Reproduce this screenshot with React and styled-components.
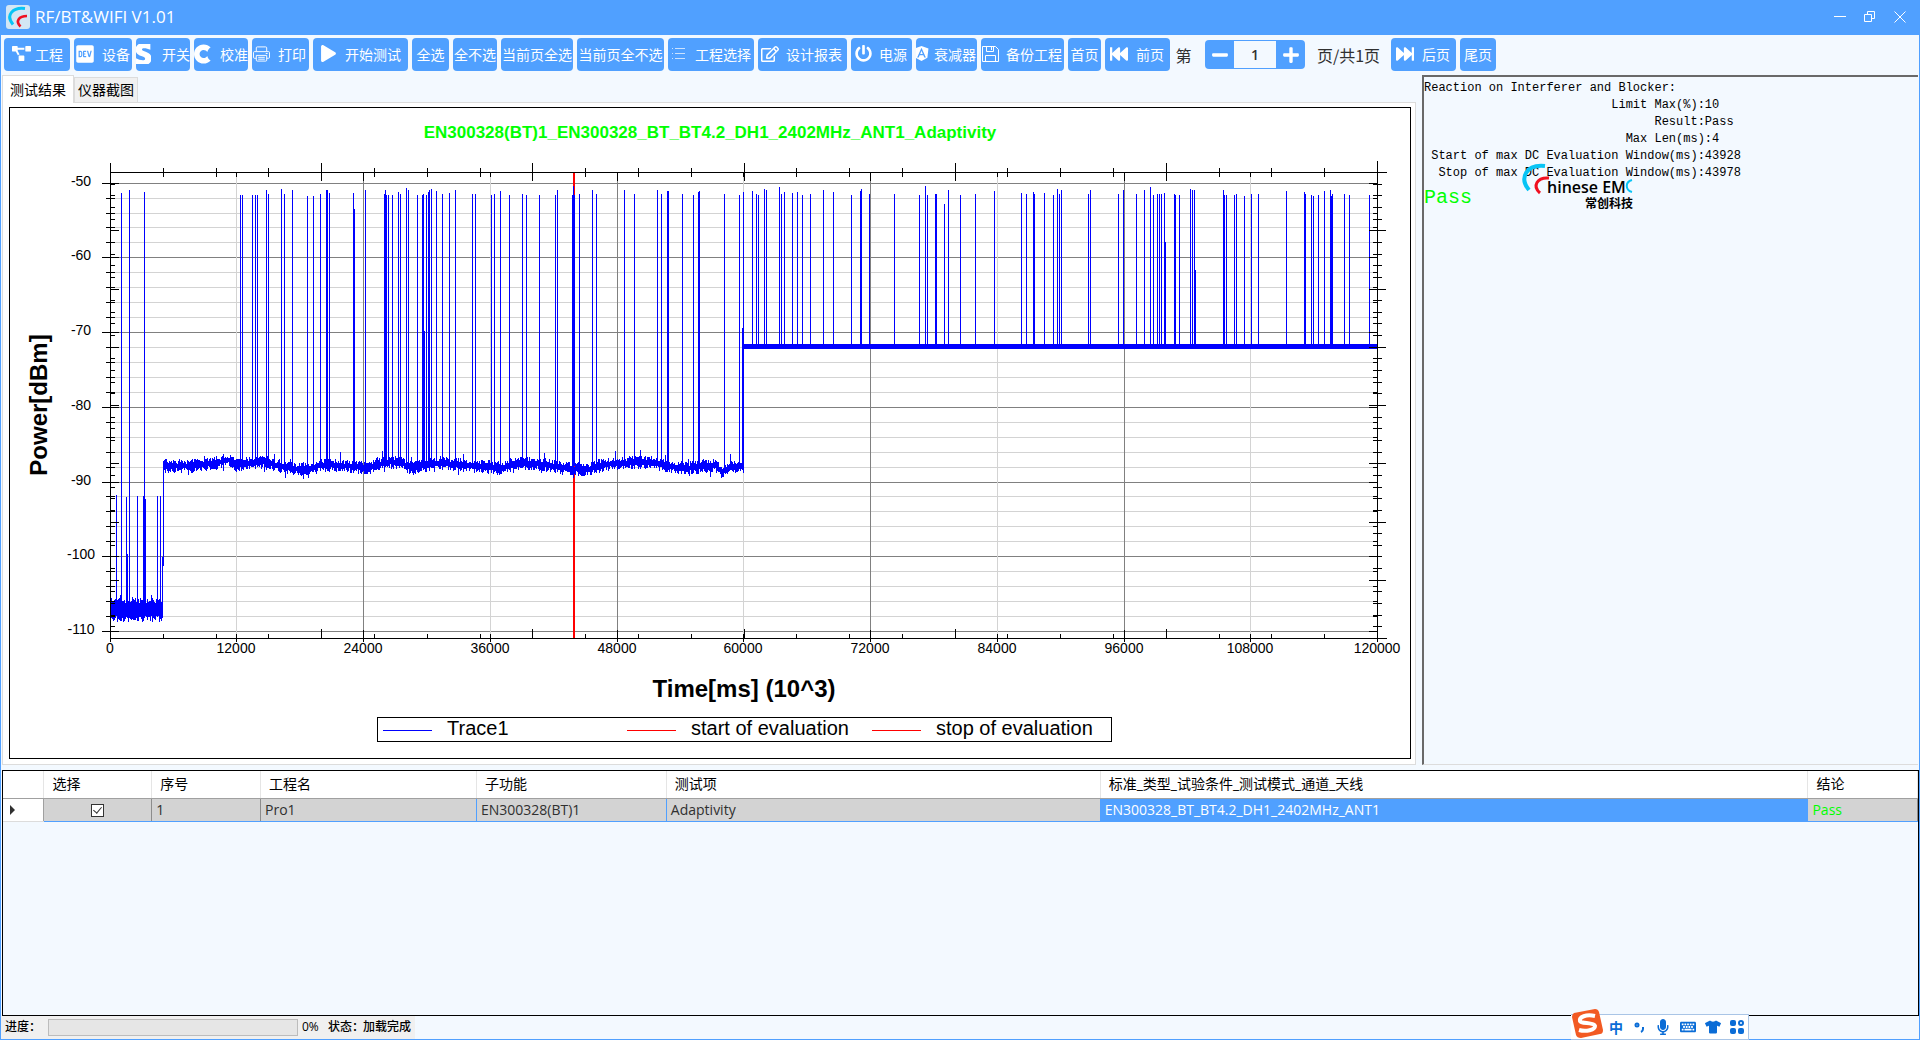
import { useState } from "react";
import styled, { createGlobalStyle } from "styled-components";
import {
  FaAngular,
  FaCuttlefish,
  FaDev,
  FaFastBackward,
  FaFastForward,
  FaKeyboard,
  FaMicrophone,
  FaMinus,
  FaPlay,
  FaPlus,
  FaPowerOff,
  FaProjectDiagram,
  FaRegEdit,
  FaStripeS,
  FaTshirt
} from "react-icons/fa";

const BLUE = "#50a0ff";
const PALE = "#f3f9ff";

const GlobalStyle = createGlobalStyle`
  * {
    box-sizing: border-box;
  }

  body {
    margin: 0;
    font-family: "Open Sans", "Noto Sans CJK SC", sans-serif;
    font-size: 14px;
    color: #303030;
  }

  button,
  input {
    font: inherit;
    color: inherit;
    margin: 0;
    padding: 0;
    border: 0;
  }
`;

// Window frame
// ----------------------------------------------------------------------------

const Window = styled.div`
  display: flex;
  flex-direction: column;
  min-height: 100vh;
  border: 1px solid ${BLUE};
  background: ${PALE};
`;

const TitleBar = styled.header`
  display: flex;
  align-items: center;
  height: 34px;
  padding: 0 4px 2px 5px;
  background: ${BLUE};
  color: #fff;
`;

const AppName = styled.h1`
  flex: 1;
  margin: 0 0 0 5px;
  font-size: 17px;
  line-height: 24px;
  font-weight: 400;
`;

const WindowButton = styled.button`
  display: flex;
  justify-content: center;
  width: 30px;
  background: none;
`;

// Toolbar
// ----------------------------------------------------------------------------

const Toolbar = styled.nav`
  display: flex;
  align-items: center;
  gap: 4px;
  height: 40px;
  padding: 0 3px 1px;
`;

const ToolButton = styled.button`
  display: flex;
  flex: none;
  align-items: center;
  justify-content: ${p => (p.$pad === undefined ? "center" : "flex-start")};
  gap: ${p => p.$gap || 0}px;
  width: ${p => p.$width}px;
  height: 33px;
  padding: 0 0 2px ${p => p.$pad || 0}px;
  overflow: hidden;
  border-radius: 4px;
  background: ${BLUE};
  color: #fff;
  font-family: "Noto Sans CJK SC", sans-serif;
  line-height: 20px;
  white-space: nowrap;

  svg {
    flex: none;
  }
`;

const PageText = styled.label`
  flex: none;
  width: ${p => p.$width}px;
  text-align: center;
  font-family: "Noto Sans CJK SC", sans-serif;
  font-size: 16px;
  line-height: 24px;
`;

const Pager = styled.div`
  display: flex;
  width: 100px;
  height: 29px;
  margin: 0 1px 0 6px;
  padding: 1px 0;
  border-radius: 4px;
  background: ${BLUE};
`;

const PagerButton = styled.button`
  display: flex;
  align-items: center;
  justify-content: center;
  width: 29px;
  background: none;
  color: #fff;
`;

const PagerInput = styled.input`
  width: 42px;
  background: ${PALE};
  text-align: center;
  font-weight: 600;
`;

// Main area
// ----------------------------------------------------------------------------

const Main = styled.main`
  display: grid;
  grid-template-columns: minmax(0, 1fr) 496px;
  gap: 6px;
  padding: 0 1px;
`;

const Tabs = styled.div`
  display: flex;
  align-items: flex-end;
  height: 27px;
`;

const Tab = styled.button`
  width: ${p => (p.$active ? 72 : 64)}px;
  height: ${p => (p.$active ? 28 : 25)}px;
  margin-bottom: ${p => (p.$active ? -1 : 0)}px;
  padding-bottom: 2px;
  border: 1px solid #dcdcdc;
  border-bottom: 0;
  background: ${p => (p.$active ? "#fff" : "#f0f0f0")};
  color: #000;
  font-family: "Noto Sans CJK SC", sans-serif;
  line-height: 20px;
  white-space: nowrap;
`;

const TabPanel = styled.section`
  padding: 4px 4px 5px 6px;
  border: 1px solid #dcdcdc;
  background: #fff;
`;

const ChartCard = styled.figure`
  display: flex;
  flex-direction: column;
  align-items: center;
  margin: 0;
  padding-bottom: 15px;
  border: 1px solid #000;
  color: #000;
  font-family: "Liberation Sans", Arial, sans-serif;
`;

const ChartTitle = styled.figcaption`
  height: 42px;
  padding-top: 15px;
  color: #0f0;
  font-size: 17px;
  line-height: 20px;
  font-weight: 700;
`;

const Plot = styled.svg`
  display: block;
  width: 100%;
  height: auto;
  font-size: 14px;
  shape-rendering: crispEdges;
`;

const AxisTitle = styled.div`
  margin: 13px 0 14px;
  padding-left: 68px;
  font-size: 24px;
  line-height: 28px;
  font-weight: 700;
`;

const Legend = styled.ul`
  display: grid;
  grid-template-columns: 244px 245px 1fr;
  width: 735px;
  height: 25px;
  margin: 0 0 1px 69px;
  padding: 0 0 0 5px;
  border: 1px solid #000;
  list-style: none;
`;

const LegendItem = styled.li`
  display: flex;
  align-items: center;
  gap: 15px;
  padding-bottom: 4px;
  font-size: 20px;
  line-height: 20px;
  white-space: nowrap;

  &::before {
    content: "";
    width: 49px;
    height: 1px;
    margin-top: 4px;
    background: ${p => p.$color};
  }
`;

const Report = styled.section`
  position: relative;
  padding: 3px 0;
  border: 1px solid #696969;
  border-width: 2px 0 1px 2px;
  border-color: #696969 #dcdcdc #dcdcdc #696969;
  color: #000;
  font-family: "Liberation Mono", monospace;
`;

const ReportText = styled.pre`
  margin: 0;
  font-family: inherit;
  font-size: 12px;
  line-height: 17px;
`;

const Verdict = styled.p`
  margin: 4px 0 0;
  color: #0f0;
  font-size: 20px;
  line-height: 24px;
`;

const Watermark = styled.svg`
  position: absolute;
  left: 98px;
  top: 85px;
`;

// Results table
// ----------------------------------------------------------------------------

const TableBox = styled.section`
  flex: 1;
  margin: 5px 0 0 1px;
  border: 1px solid #000;
`;

const Table = styled.table`
  width: 100%;
  border-collapse: collapse;
  table-layout: fixed;
  background: #fff;
`;

const HeadCell = styled.th`
  height: 27px;
  padding: 0 8px;
  border-right: 1px solid #e5e5e5;
  border-bottom: 1px solid #a0a0a0;
  color: #000;
  font-weight: 400;
  line-height: 20px;
  text-align: left;
`;

const Cell = styled.td`
  height: 23px;
  padding: 0 4px;
  border-right: 1px solid ${p => p.$line || "#8c8c8c"};
  border-bottom: 1px solid ${BLUE};
  background: ${p => (p.$selected ? BLUE : "#d3d3d3")};
  color: ${p => p.$color || "#303030"};
  line-height: 20px;
  text-align: ${p => p.$align || "left"};
  white-space: nowrap;
`;

const RowMarker = styled.th`
  padding: 0 0 0 7px;
  border-right: 1px solid #a0a0a0;
  border-bottom: 1px solid #dcdcdc;
  background: #fff;
  text-align: left;

  svg {
    display: block;
  }
`;

const Check = styled.input`
  appearance: none;
  display: inline-block;
  width: 13px;
  height: 13px;
  border: 1px solid #333;
  background: #fff;
  vertical-align: middle;

  &:checked::after {
    content: "";
    display: block;
    width: 4px;
    height: 7px;
    margin: 0 0 0 3px;
    border: solid #333;
    border-width: 0 1px 1px 0;
    transform: rotate(40deg);
  }
`;

// Status bar
// ----------------------------------------------------------------------------

const StatusBar = styled.footer`
  display: flex;
  align-items: center;
  height: 23px;
  color: #000;
  font-size: 12px;
  line-height: 18px;
`;

const StatusGroup = styled.div`
  display: flex;
  align-items: center;
  height: 100%;
  padding: 0 3px 1px 4px;
  background: #f0f0f0;
`;

const StatusText = styled.span`
  width: ${p => p.$width}px;
  font-weight: 500;
  white-space: nowrap;
`;

const Progress = styled.progress`
  appearance: none;
  width: 250px;
  height: 17px;
  margin: 0 4px 0 13px;
  border: 1px solid #bcbcbc;
  background: #e6e6e6;

  &::-webkit-progress-bar {
    background: #e6e6e6;
  }
`;

const InputMethod = styled.aside`
  position: fixed;
  left: 1571px;
  bottom: 0;
  display: flex;
  align-items: center;
  height: 26px;
  width: 178px;
  gap: 9px;
  padding: 0 0 1px 38px;
  border: 1px solid #a9c5e6;
  border-left: 0;
  background: #fff;
  color: #0a6cd6;
  font-weight: 700;

  svg {
    flex: none;
  }
`;

const SogouMark = styled.svg`
  position: absolute;
  left: 0;
  bottom: 0;
`;

// Data
// ----------------------------------------------------------------------------

// [x, top] of every burst that starts from the -107 dBm floor
const LOW_SPIKES = [
  [116, 495], [121, 193], [126, 497], [127, 554], [129, 190], [137, 496], [143, 496],
  [144, 192], [145, 499], [157, 496], [160, 496], [162, 557]
];

// ... from the -88 dBm floor
const MID_SPIKES = [
  [240, 195], [242, 195], [252, 195], [255, 195], [257, 195], [266, 190], [268, 194],
  [281, 189], [284, 194], [292, 190], [307, 196], [313, 196], [320, 194], [326, 190],
  [327, 190], [329, 193], [353, 193], [354, 209], [365, 190], [384, 194], [385, 190],
  [386, 195], [388, 195], [392, 195], [398, 192], [400, 194], [406, 188], [408, 190],
  [417, 195], [422, 195], [423, 194], [424, 331], [426, 195], [428, 192], [429, 190],
  [431, 189], [436, 191], [442, 194], [449, 193], [455, 190], [472, 194], [475, 194],
  [491, 195], [494, 194], [500, 191], [509, 195], [522, 194], [526, 195], [539, 195],
  [555, 195], [557, 190], [572, 195], [573, 186], [574, 195], [579, 194], [592, 190],
  [596, 194], [624, 190], [634, 194], [657, 190], [661, 194], [667, 191], [668, 191],
  [682, 194], [693, 195], [698, 192], [699, 191], [724, 194], [739, 195], [742, 328],
  [743, 192]
];

// ... and from the -72 dBm floor
const HIGH_SPIKES = [
  [752, 191], [756, 194], [758, 195], [764, 189], [766, 190], [779, 187], [781, 194],
  [784, 192], [792, 193], [797, 192], [802, 195], [810, 194], [823, 190], [833, 192],
  [851, 195], [860, 191], [861, 189], [869, 194], [894, 194], [919, 195], [925, 186],
  [927, 195], [935, 194], [936, 194], [944, 204], [948, 190], [960, 195], [975, 194],
  [994, 191], [1021, 193], [1026, 194], [1033, 192], [1034, 194], [1044, 193], [1053, 195],
  [1057, 189], [1059, 194], [1061, 190], [1088, 194], [1090, 190], [1118, 194], [1123, 190],
  [1136, 194], [1144, 190], [1150, 187], [1153, 195], [1157, 194], [1159, 194], [1161, 194],
  [1164, 193], [1165, 242], [1174, 194], [1175, 195], [1179, 195], [1190, 189], [1192, 190],
  [1194, 190], [1195, 270], [1223, 190], [1224, 195], [1226, 195], [1234, 195], [1236, 194],
  [1244, 196], [1251, 194], [1258, 194], [1286, 191], [1304, 192], [1305, 194], [1311, 195],
  [1313, 196], [1318, 195], [1324, 191], [1330, 190], [1331, 196], [1332, 194], [1344, 194],
  [1349, 195], [1369, 195]
];

// slow drift of the -88 dBm floor
const DRIFT = [
  [163, 466], [190, 466], [215, 463], [228, 460], [236, 465], [262, 462], [280, 466],
  [300, 470], [325, 465], [350, 466], [368, 469], [385, 462], [400, 462], [411, 468],
  [440, 463], [460, 465], [500, 468], [515, 464], [535, 463], [565, 468], [587, 470],
  [600, 465], [620, 463], [650, 462], [670, 467], [690, 468], [715, 465], [722, 472],
  [730, 466], [744, 467]
];

const driftAt = x => {
  const i = DRIFT.findIndex(([px]) => px > x);
  const [x0, y0] = DRIFT[i - 1];
  const [x1, y1] = DRIFT[i];
  return y0 + ((y1 - y0) * (x - x0)) / (x1 - x0);
};

const bar = (x, top, bottom) => `M${x} ${Math.round(top)}h1V${Math.round(bottom)}h-1z`;

const buildTrace = () => {
  let seed = 7;
  const rand = () => {
    seed = (seed * 16807) % 2147483647;
    return seed / 2147483647;
  };
  const parts = [];
  for (let x = 111; x < 163; x++) {
    parts.push(bar(x, 603 - rand() * 5 - (rand() > 0.9 ? 5 : 0), 616 + rand() * 6));
  }
  for (let x = 163; x < 744; x++) {
    const mid = driftAt(x);
    const peak = rand() > 0.93 ? rand() * 8 : 0;
    const dip = rand() > 0.93 ? rand() * 5 : 0;
    parts.push(bar(x, mid - 2 - rand() * 5 - peak, mid + 2 + rand() * 5 + dip));
  }
  LOW_SPIKES.forEach(([x, top]) => parts.push(bar(x, top, 606)));
  MID_SPIKES.forEach(([x, top]) => parts.push(bar(x, top, 466)));
  HIGH_SPIKES.forEach(([x, top]) => parts.push(bar(x, top, 346)));
  parts.push(bar(163, 461, 566));
  parts.push("M743 344H1378V349H743z");
  return parts.join("");
};

const TRACE = buildTrace();

const TOOLS = [
  { text: "工程", width: 66, pad: 8, gap: 4, icon: <FaProjectDiagram size={19} /> },
  { text: "设备", width: 58, pad: 1, gap: 7, icon: <FaDev size={20} /> },
  { text: "开关", width: 54, pad: 0, gap: 11, icon: <FaStripeS viewBox="20 40 340 432" style={{ width: 15, height: 20 }} /> },
  { text: "校准", width: 54, pad: 0, gap: 9, icon: <FaCuttlefish viewBox="0 32 440 448" style={{ width: 17, height: 20 }} /> },
  { text: "打印", width: 57, pad: 1, gap: 8, icon: <PrinterIcon /> },
  { text: "开始测试", width: 95, pad: 7, gap: 8, icon: <FaPlay size={17} /> },
  { text: "全选", width: 37 },
  { text: "全不选", width: 44 },
  { text: "当前页全选", width: 72 },
  { text: "当前页全不选", width: 87 },
  { text: "工程选择", width: 86, pad: 3, gap: 9, icon: <ListIcon /> },
  { text: "设计报表", width: 89, pad: 3, gap: 7, icon: <FaRegEdit size={18} /> },
  { text: "电源", width: 61, pad: 4, gap: 7, icon: <FaPowerOff size={17} /> },
  { text: "衰减器", width: 61, pad: 0, gap: 5, icon: <FaAngular viewBox="60 32 388 448" style={{ width: 13, height: 17 }} /> },
  { text: "备份工程", width: 83, pad: 1, gap: 7, icon: <DiskIcon /> },
  { text: "首页", width: 33 },
  { text: "前页", width: 65, pad: 5, gap: 8, icon: <FaFastBackward size={18} /> }
];

const REPORT = `Reaction on Interferer and Blocker:
                          Limit Max(%):10
                                Result:Pass
                            Max Len(ms):4
 Start of max DC Evaluation Window(ms):43928
  Stop of max DC Evaluation Window(ms):43978`;

// Drawings
// ----------------------------------------------------------------------------

function PrinterIcon() {
  return (
    <svg width="17" height="18" viewBox="0 0 18 18" fill="none" stroke="#fff">
      <path d="M3.5 6V2.5a1 1 0 0 1 1-1h9a1 1 0 0 1 1 1V6M3.5 13.5h-2a1 1 0 0 1-1-1v-5a1 1 0 0 1 1-1h15a1 1 0 0 1 1 1v5a1 1 0 0 1-1 1h-2M3.5 10.500h11v5a1 1 0 0 1-1 1h-9a1 1 0 0 1-1-1zM5.500 12.500h7M5.500 14.500h7M13.500 8.500h2" />
    </svg>
  );
}

function ListIcon() {
  return (
    <svg width="15" height="18" viewBox="0 0 15 18" stroke="#fff" opacity="0.7">
      <path d="M1 3.500h1M4 3.500h10M1 8.500h1M4 8.500h10M1 13.500h1M4 13.500h10" />
    </svg>
  );
}

function DiskIcon() {
  return (
    <svg width="17" height="18" viewBox="0 0 17 18" fill="none" stroke="#fff">
      <path d="M.5 1.500h13l3 3v12H.5zM4.500 1.500v5h7v-5M9.500 2v3M3.500 16.500v-6h10v6" />
    </svg>
  );
}

function AppIcon() {
  return (
    <svg width="24" height="24" viewBox="0 0 24 24" fill="none">
      <rect width="24" height="24" rx="3" fill="#d3e6f4" />
      <path d="M19 3.500C7 2 -1 10 7 19.500" stroke="#08c4f5" strokeWidth="3" />
      <path d="M21 11C13 11 9 16 14.500 21.500" stroke="#f01020" strokeWidth="2.600" />
    </svg>
  );
}

// Axis positions, in pixels of the plot
const TIME_LINES = [110, 236, 363, 490, 617, 743, 870, 997, 1124, 1250, 1377];
const DB_LINES = [
  183, 198, 213, 227, 242, 257, 272, 287, 302, 317, 332, 347, 362, 377, 392, 407,
  422, 437, 452, 467, 482, 496, 511, 526, 541, 556, 571, 586, 601, 616, 631
];

const ticks = (from, to, count) => [...Array(count + 1)].map((_, i) => Math.round(from + ((to - from) * i) / count));

const TOP_TICKS = ticks(110, 1377, 24);
const SIDE_TICKS = ticks(172, 638, 40);

function ChartPlot() {
  return (
    <Plot viewBox="10 150 1400 512" role="img" aria-label="Power over time">
      {DB_LINES.map((y, i) => (
        <rect key={y} x="110" y={y} width="1268" height="1" fill={i % 5 ? "#d3d3d3" : "#808080"} />
      ))}
      {TIME_LINES.map((x, i) => (
        <rect key={x} x={x} y="172" width="1" height="466" fill={i % 2 ? "#d3d3d3" : "#808080"} />
      ))}

      <rect x="573" y="172" width="2" height="466" fill="#f00" />
      <path d={TRACE} fill="#00f" />

      <path d="M110 164h1V642h-1zM1377 161h1V642h-1zM110 172H1387v1H110zM110 638H1387v1H110z" />
      {TOP_TICKS.map((x, i) => (
        <g key={x}>
          <rect x={x} y={i % 4 ? 168 : 163} width="1" height={i % 4 ? 9 : 18} />
          <rect x={x} y={i % 4 ? 634 : 629} width="1" height={i % 4 ? 4 : 9} />
        </g>
      ))}
      {TIME_LINES.map((x, i) => (
        <g key={x}>
          <rect x={x} y="172" width="1" height={i % 2 ? 5 : 9} />
          <rect x={x} y={i % 2 ? 634 : 630} width="1" height={i % 2 ? 8 : 12} />
        </g>
      ))}
      {DB_LINES.map((y, i) => (
        <g key={y}>
          <rect x={i % 5 ? 106 : 102} y={y} width={i % 5 ? 9 : 17} height="1" />
          <rect x={i % 5 ? 1373 : 1369} y={y} width={i % 5 ? 4 : 8} height="1" />
        </g>
      ))}
      {SIDE_TICKS.slice(1, -1).map((y, i) => {
        const major = (i + 1) % 5 === 0;
        return (
          <g key={y}>
            <rect x="110" y={y} width={major ? 9 : 5} height="1" />
            <rect x={major ? 1369 : 1373} y={y} width={major ? 17 : 9} height="1" />
          </g>
        );
      })}

      {[-50, -60, -70, -80, -90, -100, -110].map((db, i) => (
        <text key={db} x="81" y={DB_LINES[i * 5] + 3} textAnchor="middle">
          {db}
        </text>
      ))}
      {TIME_LINES.map((x, i) => (
        <text key={x} x={x} y="653" textAnchor="middle">
          {i * 12000}
        </text>
      ))}
      <text transform="translate(47 405) rotate(-90)" textAnchor="middle" fontSize="24" fontWeight="700">
        Power[dBm]
      </text>
    </Plot>
  );
}

// Default
// ----------------------------------------------------------------------------

export default function App() {
  const [page, setPage] = useState(1);
  const [checked, setChecked] = useState(true);

  return (
    <Window>
      <GlobalStyle />
      <TitleBar>
        <AppIcon />
        <AppName>RF/BT&amp;WIFI V1.01</AppName>
        <WindowButton aria-label="Minimize">
          <svg width="12" height="12" stroke="#fff">
            <path d="M0 5.500h12" />
          </svg>
        </WindowButton>
        <WindowButton aria-label="Restore">
          <svg width="12" height="12" stroke="#fff" fill="none">
            <path d="M.5 3.500h7v7h-7zM3.500 3.500v-3h7v7h-3" />
          </svg>
        </WindowButton>
        <WindowButton aria-label="Close">
          <svg width="12" height="12" stroke="#fff">
            <path d="M.5 .5l11 11M11.500 .5l-11 11" />
          </svg>
        </WindowButton>
      </TitleBar>

      <Toolbar>
        {TOOLS.map(({ text, width, pad, gap, icon }) => (
          <ToolButton key={text} $width={width} $pad={pad} $gap={gap}>
            {icon}
            {text}
          </ToolButton>
        ))}
        <PageText htmlFor="page" $width={19}>
          第
        </PageText>
        <Pager style={{ marginLeft: 8 }}>
          <PagerButton aria-label="Previous" onClick={() => setPage(Math.max(1, page - 1))}>
            <FaMinus size={18} />
          </PagerButton>
          <PagerInput id="page" value={page} onChange={e => setPage(Number(e.target.value) || 1)} />
          <PagerButton aria-label="Next" onClick={() => setPage(page + 1)}>
            <FaPlus size={18} />
          </PagerButton>
        </Pager>
        <PageText htmlFor="page" $width={77}>
          页/共1页
        </PageText>
        <ToolButton $width={65} $pad={5} $gap={8}>
          <FaFastForward size={18} />
          后页
        </ToolButton>
        <ToolButton $width={36}>尾页</ToolButton>
      </Toolbar>

      <Main>
        <div>
          <Tabs role="tablist">
            <Tab role="tab" aria-selected="true" $active>
              测试结果
            </Tab>
            <Tab role="tab" aria-selected="false">
              仪器截图
            </Tab>
          </Tabs>
          <TabPanel>
            <ChartCard>
              <ChartTitle>EN300328(BT)1_EN300328_BT_BT4.2_DH1_2402MHz_ANT1_Adaptivity</ChartTitle>
              <ChartPlot />
              <AxisTitle>Time[ms] (10^3)</AxisTitle>
              <Legend>
                <LegendItem $color="#00f">Trace1</LegendItem>
                <LegendItem $color="#f00">start of evaluation</LegendItem>
                <LegendItem $color="#f00">stop of evaluation</LegendItem>
              </Legend>
            </ChartCard>
          </TabPanel>
        </div>

        <Report>
          <ReportText>{REPORT}</ReportText>
          <Verdict>Pass</Verdict>
          <Watermark width="116" height="50" viewBox="0 0 116 50" fill="none">
            <path d="M23 4C4 2 -3 16 7 28" stroke="#08c4f5" strokeWidth="4" />
            <path d="M27 16C15 15 10 24 18 31" stroke="#f01020" strokeWidth="3" />
            <path d="M110 18C103 20 103 28 110 30" stroke="#08c4f5" strokeWidth="2" />
            <text x="25" y="31" fill="#000" fontFamily="Open Sans" fontSize="16" fontWeight="600">
              hinese EM
            </text>
            <text x="63" y="46" fill="#000" fontFamily="Noto Sans CJK SC" fontSize="12" fontWeight="700">
              常创科技
            </text>
          </Watermark>
        </Report>
      </Main>

      <TableBox>
        <Table>
          <colgroup>
            <col style={{ width: "2.14%" }} />
            <col style={{ width: "5.63%" }} />
            <col style={{ width: "5.68%" }} />
            <col style={{ width: "11.28%" }} />
            <col style={{ width: "9.92%" }} />
            <col style={{ width: "22.66%" }} />
            <col style={{ width: "36.97%" }} />
            <col />
          </colgroup>
          <thead>
            <tr>
              <HeadCell aria-label="Current row" />
              <HeadCell>选择</HeadCell>
              <HeadCell>序号</HeadCell>
              <HeadCell>工程名</HeadCell>
              <HeadCell>子功能</HeadCell>
              <HeadCell>测试项</HeadCell>
              <HeadCell>标准_类型_试验条件_测试模式_通道_天线</HeadCell>
              <HeadCell>结论</HeadCell>
            </tr>
          </thead>
          <tbody>
            <tr>
              <RowMarker scope="row" aria-label="Selected row">
                <svg width="6" height="10" fill="#303030">
                  <path d="M0 0l5 5-5 5z" />
                </svg>
              </RowMarker>
              <Cell $align="center">
                <Check type="checkbox" aria-label="选择" checked={checked} onChange={() => setChecked(!checked)} />
              </Cell>
              <Cell>1</Cell>
              <Cell $line={BLUE}>Pro1</Cell>
              <Cell $line={BLUE}>EN300328(BT)1</Cell>
              <Cell $line={BLUE}>Adaptivity</Cell>
              <Cell $selected $line={BLUE} $color="#fff">
                EN300328_BT_BT4.2_DH1_2402MHz_ANT1
              </Cell>
              <Cell $color="#0f0">Pass</Cell>
            </tr>
          </tbody>
        </Table>
      </TableBox>

      <StatusBar>
        <StatusGroup>
          <StatusText as="label" htmlFor="progress" $width={30}>
            进度：
          </StatusText>
          <Progress id="progress" value="0" max="100" />
          <StatusText $width={26}>0%</StatusText>
          <StatusText $width={35}>状态：</StatusText>
          <StatusText $width={49}>加载完成</StatusText>
        </StatusGroup>
      </StatusBar>

      <InputMethod>
        <SogouMark width="33" height="31" viewBox="0 0 33 31">
          <path d="M3 5L24 1q3 0 4 3l4 18q0 4-3 4L10 30q-4 0-5-3L1 9q0-3 2-4z" fill="#f25a23" />
          <path d="M24 8C15 6 8 9 9 13c1 3 14 1 15 5 0 4-9 6-16 4" fill="none" stroke="#fff" strokeWidth="4" />
        </SogouMark>
        <span>中</span>
        <svg width="14" height="14" viewBox="0 0 14 14" fill="none" stroke="currentColor" strokeWidth="2">
          <circle cx="5" cy="5" r="1.500" />
          <path d="M11 7v2q0 2-2 3" />
        </svg>
        <FaMicrophone size={16} />
        <FaKeyboard size={16} />
        <FaTshirt size={16} />
        <svg width="14" height="14" viewBox="0 0 14 14" fill="currentColor">
          <rect width="6" height="6" rx="2" />
          <circle cx="11" cy="3" r="2" fill="none" stroke="currentColor" strokeWidth="2" />
          <rect y="8" width="6" height="6" rx="2" />
          <rect x="8" y="8" width="6" height="6" rx="2" />
        </svg>
      </InputMethod>
    </Window>
  );
}
